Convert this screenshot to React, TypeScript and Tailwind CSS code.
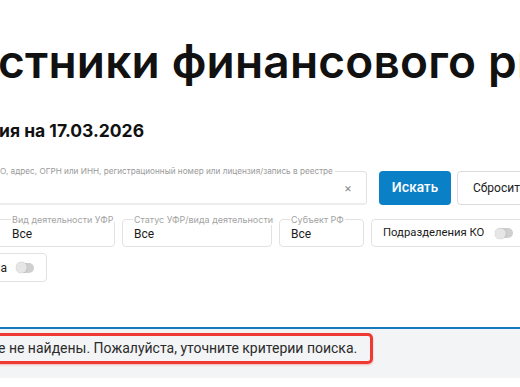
import React from 'react';

const Toggle: React.FC = () => (
  <span className="relative inline-flex shrink-0 items-center w-[17px] h-[10px] rounded-full bg-[#cfcfcf]">
    <span className="absolute left-[-1px] w-[11px] h-[11px] rounded-full bg-[#e6e6e6] shadow-[0_0_1px_rgba(0,0,0,0.35)]" />
  </span>
);

interface FieldProps {
  label: string;
  value: string;
  width: string;
  inset?: string;
}

const SelectField: React.FC<FieldProps> = ({ label, value, width, inset = 'pl-[11px]' }) => (
  <div className={`relative shrink-0 h-[28px] border border-[#e2e2e2] rounded-[4px] flex items-center ${width} ${inset}`}>
    <span className="absolute top-[-6px] bg-white px-[1px] ml-[-1px] text-[9px] leading-[11px] text-[#a3a3a3] whitespace-nowrap">
      {label}
    </span>
    <span className="text-[12px] text-[#1b1b1b] pt-[2px] font-['Roboto',sans-serif]">{value}</span>
  </div>
);

export default function App() {
  return (
    <div className="w-[520px] h-[387px] overflow-hidden bg-white flex flex-col font-['Inter',sans-serif]">
      {/* Page title */}
      <h1 className="mt-[33px] ml-[-2px] text-[46px] leading-[56px] font-semibold text-[#111] whitespace-nowrap tracking-[0.2px]">
        стники финансового рынка
      </h1>

      <div className="mt-[30px] ml-[-1px] text-[17.5px] leading-[24px] font-bold text-[#111] whitespace-nowrap">
        ия на 17.03.2026
      </div>

      {/* Search row */}
      <div className="mt-[28px] flex items-center ml-[-20px]">
        <div className="relative shrink-0 w-[387px] h-[34px] border border-[#e2e2e2] border-b-[2px] border-b-[#ececec] rounded-[4px] flex items-center justify-end pr-[14px]">
          <span className="absolute top-[-6px] left-[17px] bg-white px-[2px] text-[8.2px] leading-[11px] text-[#9a9a9a] whitespace-nowrap">
            О, адрес, ОГРН или ИНН, регистрационный номер или лицензия/запись в реестре
          </span>
          <span className="text-[12px] text-[#8a8a8a] leading-none">×</span>
        </div>
        <button className="shrink-0 ml-[12px] w-[72px] h-[34px] rounded-[4px] bg-[#0a80c6] text-white text-[13px] font-semibold">
          Искать
        </button>
        <button className="shrink-0 ml-[6px] w-[90px] h-[34px] rounded-[4px] border border-[#dcdcdc] bg-white text-[#222] text-[12px] text-left pl-[15px] whitespace-nowrap font-['Roboto',sans-serif]">
          Сбросить
        </button>
      </div>

      {/* Filters */}
      <div className="mt-[14px] flex items-center gap-[7px] ml-[-20px]">
        <SelectField label="Вид деятельности УФР" value="Все" width="w-[135px]" inset="pl-[31px]" />
        <SelectField label="Статус УФР/вида деятельности" value="Все" width="w-[150px]" />
        <SelectField label="Субъект РФ" value="Все" width="w-[85px]" />
        <div className="shrink-0 h-[28px] w-[170px] border border-[#e2e2e2] rounded-[4px] flex items-center pl-[11px] gap-[12px]">
          <span className="text-[11.3px] text-[#1b1b1b] whitespace-nowrap font-['Roboto',sans-serif]">Подразделения КО</span>
          <Toggle />
        </div>
      </div>

      <div className="mt-[6px] ml-[-20px] flex">
        <div className="h-[29px] w-[67px] border border-[#e2e2e2] rounded-[4px] flex items-center justify-end pr-[12px] gap-[10px]">
          <span className="text-[12px] text-[#1b1b1b] font-['Roboto',sans-serif]">а</span>
          <Toggle />
        </div>
      </div>

      {/* Results */}
      <div className="mt-[45px] border-t-[2px] border-[#1479bd] bg-[#f3f4f6] h-[51px] pt-[4px]">
        <div className="ml-[-20px] w-[393px] h-[31px] border-[3px] border-[#ee3a33] rounded-[5px] flex items-center pl-[16px] shadow-[0_1px_2px_rgba(238,58,51,0.35)]">
          <span className="text-[14px] text-[#2b2b2b] whitespace-nowrap font-['Roboto',sans-serif] ml-[-1px]">
            е не найдены. Пожалуйста, уточните критерии поиска.
          </span>
        </div>
      </div>
    </div>
  );
}
